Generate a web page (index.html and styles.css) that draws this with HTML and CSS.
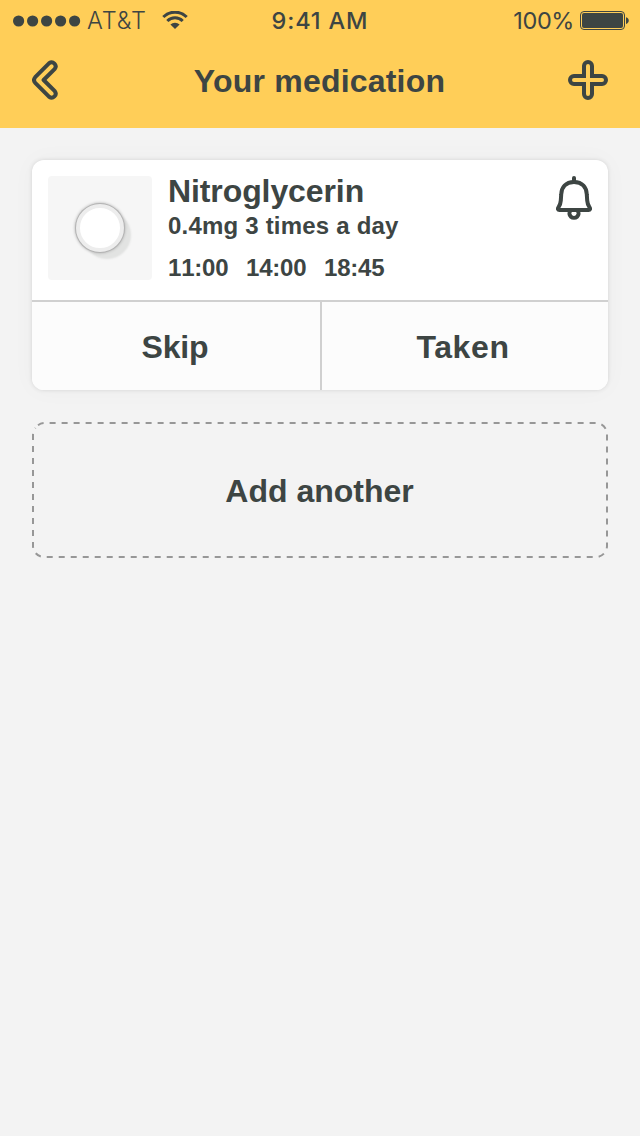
FILE: index.html
```html
<!DOCTYPE html>
<html lang="en">
<head>
<meta charset="utf-8">
<title>Your medication</title>
<link rel="stylesheet" href="styles.css">
</head>
<body>
<header class="header">
  <div class="status">
    <div class="status-left">
      <svg class="signal" width="68" height="12" viewBox="0 0 68 12"><circle cx="5.6" cy="6" r="5.6"/><circle cx="19.6" cy="6" r="5.6"/><circle cx="33.6" cy="6" r="5.6"/><circle cx="47.6" cy="6" r="5.6"/><circle cx="61.6" cy="6" r="5.6"/></svg>
      <span class="carrier">AT&amp;T</span>
      <svg class="wifi" width="26" height="18" viewBox="0 0 26 18"><path d="M1.300 6a16.500 16.500 0 0 1 23.400 0M5.300 10a10.900 10.900 0 0 1 15.400 0" fill="none" stroke="currentColor" stroke-width="3"/><path d="M8.400 13.500a6.600 6.600 0 0 1 9.200 0L13 18z"/></svg>
    </div>
    <div class="clock">9:41 AM</div>
    <div class="status-right">
      <span class="percent">100%</span>
      <svg class="battery" width="50" height="20" viewBox="0 0 50 20"><rect x=".5" y=".5" width="44" height="18" rx="3.5" fill="none" stroke="currentColor"/><rect x="2" y="2" width="41" height="15" rx="2"/><path d="M46 6.2c3.7 1 3.7 5.700 0 6.700z"/></svg>
    </div>
  </div>
  <nav class="navbar">
    <svg class="back" width="28" height="40" viewBox="0 0 28 40"><path d="M17.200 3.200L3.200 17.200Q.8 20 3.200 22.800L17.200 36.800A4 4 0 0 0 22.800 31.200L11.600 20L22.800 8.800A4 4 0 0 0 17.200 3.200Z" fill="none" stroke="currentColor" stroke-width="4" stroke-linejoin="round"/></svg>
    <h1 class="title">Your medication</h1>
    <svg class="plus" width="40" height="40" viewBox="0 0 40 40"><path d="M16 16V6a4 4 0 0 1 8 0V16H34a4 4 0 0 1 0 8H24V34a4 4 0 0 1-8 0V24H6a4 4 0 0 1 0-8Z" fill="none" stroke="currentColor" stroke-width="4"/></svg>
  </nav>
</header>
<main class="content">
  <section class="card">
    <div class="card-body">
      <div class="thumb"><div class="pill"></div></div>
      <div class="details">
        <h2 class="name">Nitroglycerin</h2>
        <p class="dose">0.4mg 3 times a day</p>
        <div class="times"><span>11:00</span><span>14:00</span><span>18:45</span></div>
      </div>
      <svg class="bell" width="36" height="44" viewBox="0 0 36 44"><path d="M18 2v4" fill="none" stroke="currentColor" stroke-width="4" stroke-linecap="round"/><path d="M18 6C9.500 6 5.500 11.500 5.200 18.500L4.800 24.500C4.500 28 3.800 29.500 2.600 31.200C1.300 33 2 34 3.500 34H32.500C34 34 34.700 33 33.400 31.200C32.200 29.500 31.500 28 31.200 24.500L30.800 18.500C30.500 11.500 26.500 6 18 6Z" fill="none" stroke="currentColor" stroke-width="4" stroke-linejoin="round"/><path d="M14.300 34.500A4.600 4.600 0 1 0 21.700 34.500" fill="none" stroke="currentColor" stroke-width="4"/></svg>
    </div>
    <div class="actions"><button class="action">Skip</button><button class="action">Taken</button></div>
  </section>
  <button class="add">
    <svg class="outline" width="576" height="136" viewBox="0 0 576 136"><path d="M6 3.200A11 11 0 0 1 12 1H564a11 11 0 0 1 11 11V124a11 11 0 0 1-11 11H12a11 11 0 0 1-11-11V12A11 11 0 0 1 3.500 6" fill="none" stroke="#979797" stroke-width="2" stroke-dasharray="6 6" stroke-dashoffset="0"/></svg>
    <span>Add another</span>
  </button>
</main>
</body>
</html>
```
FILE: styles.css
```css
* { box-sizing: border-box; margin: 0; }
body { min-height: 1136px; background: #f3f3f3; color: #3d4543; font-family: "Liberation Sans", Arial, sans-serif; font-weight: 700; }
svg { display: block; flex: none; fill: currentColor; }
.header { height: 128px; background: #ffce58; }
.status { display: grid; grid-template-columns: 1fr auto 1fr; height: 40px; font: 400 23.500px/42px Inter, sans-serif; white-space: nowrap; }
.status-left, .status-right { display: flex; align-items: flex-start; }
.status-left { padding-left: 13px; }
.status-right { justify-content: flex-end; padding-right: 10px; }
.signal { margin-top: 15px; }
.carrier { width: 75px; margin-left: 6px; font-weight: 300; letter-spacing: .9px; }
.wifi { margin-top: 11px; }
.clock { font-weight: 500; letter-spacing: .85px; }
.percent { letter-spacing: -.4px; }
.battery { margin-top: 11px; margin-left: 6px; }
.navbar { display: flex; justify-content: space-between; align-items: flex-start; height: 80px; padding: 20px 32px 0; }
.title { font-size: 32px; line-height: 36px; margin-top: 3px; margin-left: 11px; letter-spacing: .2px; }
.content { display: flex; flex-direction: column; gap: 32px; padding: 32px; }
.card { height: 230px; border-radius: 12px; background: #fff; overflow: hidden; box-shadow: 0 0 4px rgba(0,0,0,.12), 0 0 24px rgba(0,0,0,.03); }
.card-body { display: flex; height: 140px; padding: 16px; }
.thumb { display: flex; align-items: center; justify-content: center; width: 104px; height: 104px; border-radius: 4px; background: #f6f6f6; }
.pill { width: 48px; height: 48px; border: 4px solid #ededed; border-radius: 50%; background: #fff; box-shadow: 0 0 0 1px #b4b4b4, 0 0 3px 1px #aaa, 7px 7px 2px rgba(61,69,67,.11); }
.details { flex: 1; margin-left: 16px; }
.name { font-size: 32px; line-height: 36px; margin-top: -3px; letter-spacing: -.1px; }
.dose { font-size: 24px; line-height: 30px; margin-top: 2px; letter-spacing: .2px; }
.times { display: flex; gap: 18px; margin-top: 12px; font-size: 24px; line-height: 30px; font-kerning: none; letter-spacing: -.2px; }
.times span { width: 60px; }
.bell { align-self: flex-start; }
.actions { display: grid; grid-template-columns: 1fr 1fr; height: 90px; border-top: 2px solid #d0d0d0; background: #fcfcfc; }
.action { border: 0; background: none; padding: 2px 0 0; font: inherit; font-size: 32px; line-height: 36px; color: inherit; letter-spacing: -.2px; }
.action:first-child { padding-right: 2px; }
.action + .action { border-left: 2px solid #d0d0d0; padding-right: 4px; letter-spacing: .6px; }
.add { position: relative; height: 136px; border: 0; padding: 2px 1px 0 0; background: none; font: inherit; font-size: 32px; line-height: 36px; color: inherit; }
.outline { position: absolute; inset: 0; }
```
